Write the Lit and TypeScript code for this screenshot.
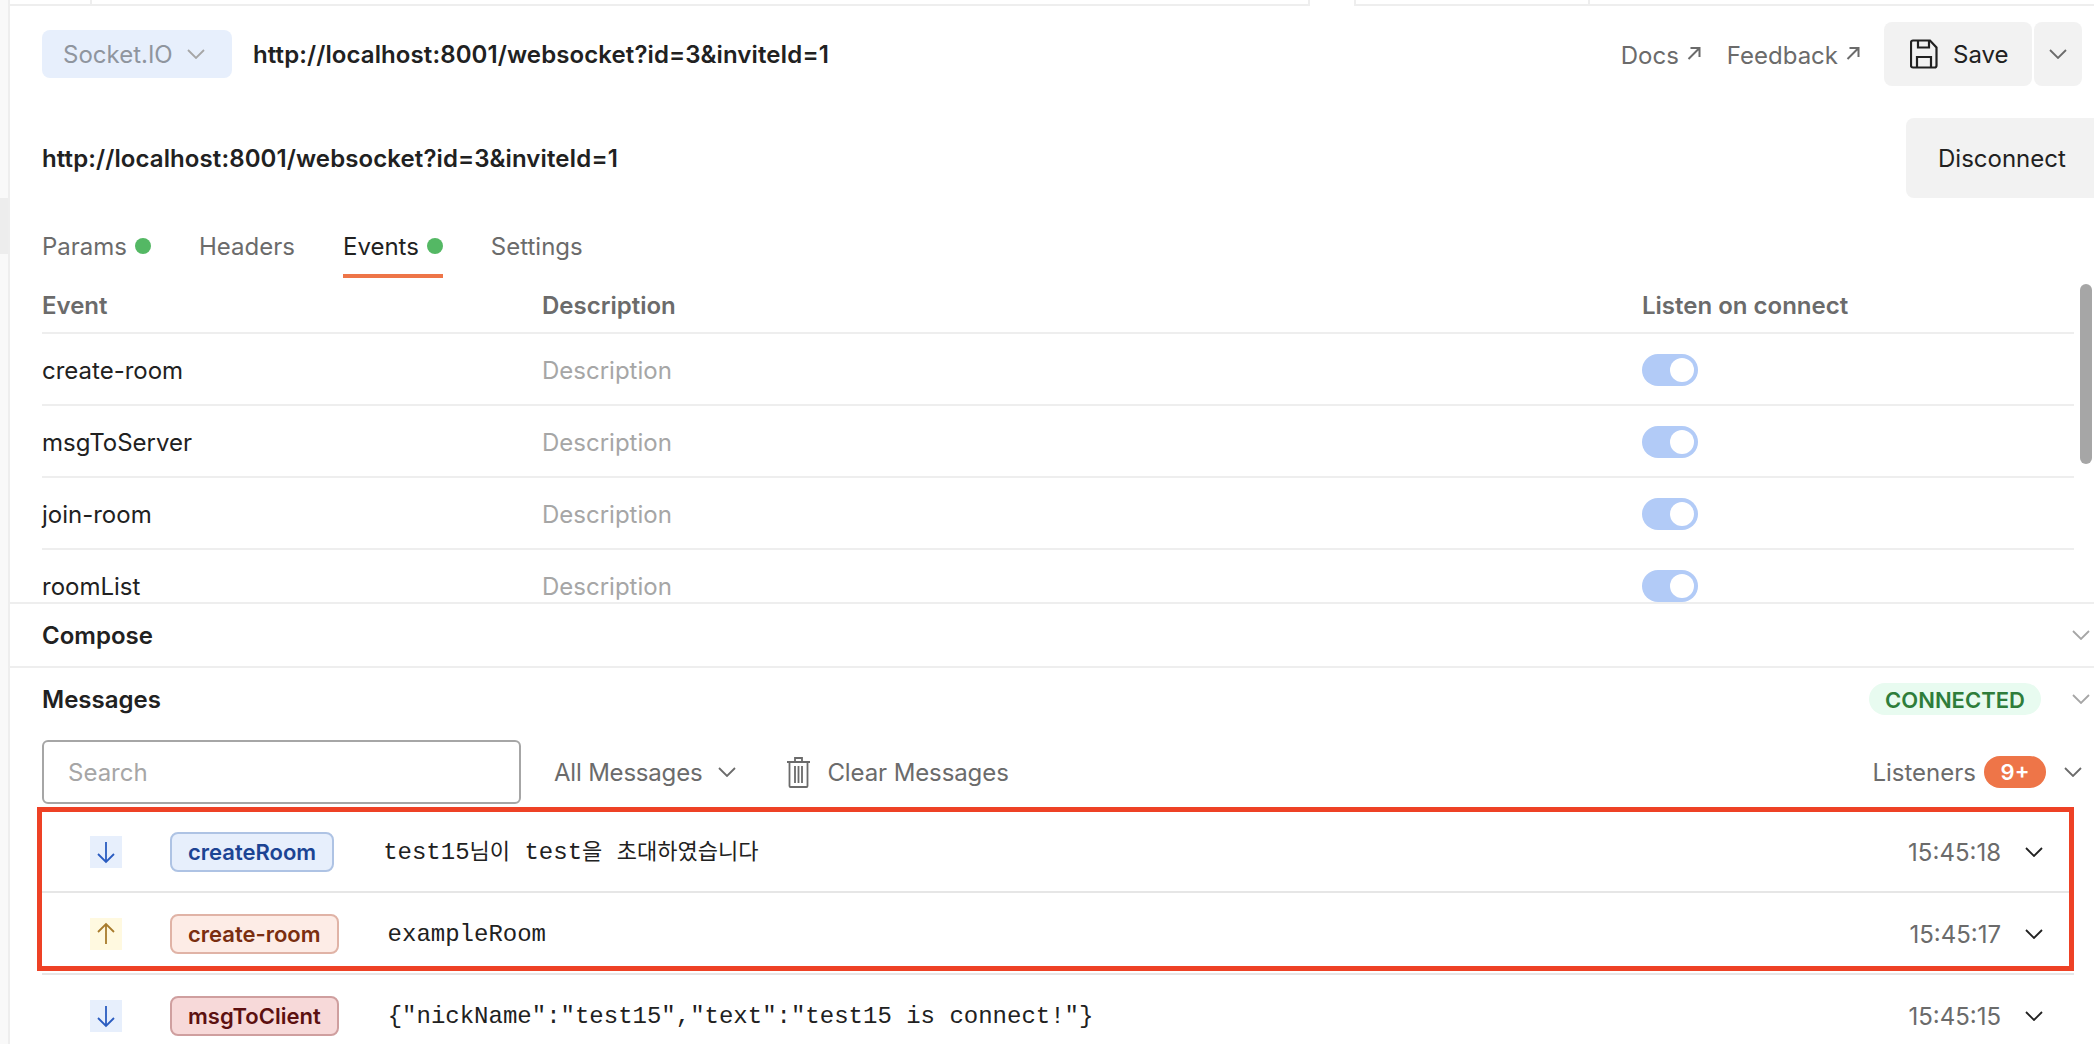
import { LitElement, html, css, svg } from "lit";
import { customElement } from "lit/decorators.js";

const chevron = () => html`<svg class="chev" viewBox="0 0 18 10" fill="none"><polyline points="1,1 9,9 17,1" stroke="currentColor" stroke-width="1.8"/></svg>`;
const ne = html`<svg class="ne" viewBox="0 0 14 14" fill="none" stroke="currentColor" stroke-width="2"><path d="M1.5 13 12 2.5M3.5 2h9v9"/></svg>`;
const arrow = (d: string) => svg`<path d=${d} fill="none" stroke="currentColor" stroke-width="1.8"/>`;

const events = ["create-room", "msgToServer", "join-room", "roomList"];
const messages = [
  { dir: "in", tag: "createRoom", cls: "blue", text: "test15님이 test을 초대하였습니다", time: "15:45:18" },
  { dir: "out", tag: "create-room", cls: "peach", text: "exampleRoom", time: "15:45:17" },
  { dir: "in", tag: "msgToClient", cls: "red", text: '{"nickName":"test15","text":"test15 is connect!"}', time: "15:45:15" },
];

// hangul runs are set a bit smaller than the latin mono around them
const monoText = (text: string) =>
  text.split(/([가-힣]+)/).map((part, i) => (i % 2 ? html`<span class="ko">${part}</span>` : part));

@customElement("app-root")
export class AppRoot extends LitElement {
  static styles = css`
    :host {
      display: flex;
      position: relative;
      width: 2094px;
      height: 1044px;
      overflow: hidden;
      background: #fff;
      color: #212121;
      font-family: Inter, "Noto Sans", sans-serif;
      font-size: 24px;
    }
    .rail { width: 8px; flex: none; background: #f9f9f9; border-right: 2px solid #eee; display: flex; flex-direction: column; }
    .rail i { display: block; margin-top: 198px; height: 56px; background: #ededed; }
    main { flex: 1; min-width: 0; display: flex; flex-direction: column; }

    .top { height: 6px; flex: none; display: flex; }
    .top i { display: block; box-sizing: border-box; border-bottom: 2px solid #eee; border-right: 2px solid #eee; }
    .top .a { width: 82px; }
    .top .b { width: 1218px; }
    .top .c { width: 236px; margin-left: 44px; border-left: 2px solid #eee; }
    .top .d { flex: 1; border-right: none; }

    .toolbar { height: 64px; margin-top: 16px; flex: none; display: flex; align-items: center; padding: 0 12px 0 32px; }
    .proto { width: 190px; height: 48px; box-sizing: border-box; background: #e7effc; border-radius: 8px; color: #8f959e; display: flex; align-items: center; padding-left: 21px; gap: 14px; }
    .proto .chev { color: #a6a6a6; }
    .url { font-weight: 600; letter-spacing: 0.1px; }
    .toolbar .url { margin-left: 21px; }
    .link { color: #6b6b6b; display: flex; align-items: center; gap: 8px; padding-top: 2px; }
    .docs { margin-left: auto; }
    .feedback { margin-left: 26px; }
    .ne { width: 14px; height: 14px; margin-top: -4px; }
    .save { margin-left: 24px; width: 148px; height: 64px; box-sizing: border-box; background: #f2f2f2; border-radius: 8px; display: flex; align-items: center; padding-left: 26px; gap: 15px; }
    .save svg { width: 28px; height: 30px; }
    .more { margin-left: 2px; width: 48px; height: 64px; background: #f2f2f2; border-radius: 8px; display: flex; align-items: center; justify-content: center; color: #6b6b6b; }

    .urlrow { height: 80px; margin-top: 32px; flex: none; display: flex; align-items: center; justify-content: space-between; padding-left: 32px; }
    .disconnect { width: 190px; height: 80px; margin-right: -2px; box-sizing: border-box; background: #f2f2f2; border-radius: 8px 0 0 8px; display: flex; align-items: center; padding-left: 32px; }

    .tabs { height: 80px; flex: none; display: flex; gap: 48px; padding-left: 32px; box-sizing: border-box; }
    .tab { height: 80px; box-sizing: border-box; display: flex; align-items: center; gap: 8px; color: #6b6b6b; padding-top: 20px; border-bottom: 4px solid transparent; }
    .tab.active { color: #212121; border-bottom-color: #ee7548; }
    .dot { width: 16px; height: 16px; border-radius: 50%; background: #54b864; }

    .table { height: 324px; flex: none; overflow: hidden; position: relative; padding: 0 20px 0 32px; }
    .thead, .trow { display: grid; grid-template-columns: 500px 1100px 1fr; align-items: center; border-bottom: 2px solid #eee; }
    .thead { height: 54px; color: #6b6b6b; font-weight: 600; }
    .trow { height: 68px; padding-top: 2px; }
    .desc { color: #a6a6a6; }
    .toggle { width: 56px; height: 32px; border-radius: 16px; background: #b2cbf7; display: flex; align-items: center; justify-content: flex-end; padding-right: 4px; box-sizing: border-box; }
    .toggle i { width: 24px; height: 24px; border-radius: 50%; background: #fff; }
    .thumb { position: absolute; right: 2px; top: 6px; width: 12px; height: 180px; border-radius: 6px; background: #a6a6a6; }

    .section { flex: none; display: flex; align-items: center; height: 62px; padding: 0 4px 0 32px; font-weight: 600; border-top: 2px solid #eee; }
    .section .chev { color: #a6a6a6; margin-left: auto; }
    .connected { margin-left: auto; margin-right: 31px; width: 172px; height: 32px; box-sizing: border-box; padding-top: 1px; border-radius: 16px; background: #e8fbf0; color: #2e7d3a; font-size: 22px; display: flex; align-items: center; justify-content: center; }
    .section .connected + .chev { margin-left: 0; }

    .filters { height: 64px; margin-top: 10px; flex: none; display: flex; align-items: center; padding: 0 12px 0 32px; color: #6b6b6b; }
    .search { width: 479px; height: 64px; box-sizing: border-box; border: 2px solid #a6a6a6; border-radius: 6px; color: #a6a6a6; display: flex; align-items: center; padding-left: 24px; }
    .all { margin-left: 33px; display: flex; align-items: center; gap: 16px; letter-spacing: -0.2px; }
    .clear { margin-left: 50px; display: flex; align-items: center; gap: 16px; letter-spacing: -0.1px; }
    .clear svg { width: 25px; height: 32px; }
    .listeners { margin-left: auto; display: flex; align-items: center; gap: 8px; }
    .badge { width: 62px; height: 32px; border-radius: 16px; background: #ee7548; color: #fff; font-weight: 600; font-size: 22px; display: flex; align-items: center; justify-content: center; }
    .listeners .chev { margin-left: 10px; }

    .list { margin: 7px 20px 0 32px; }
    .msg { height: 82px; box-sizing: border-box; border-bottom: 2px solid #e6e6e6; display: flex; align-items: center; padding: 2px 31px 0 48px; }
    .dir { width: 32px; height: 32px; flex: none; display: flex; align-items: center; justify-content: center; }
    .dir svg { width: 32px; height: 32px; }
    .dir.in { background: #e7effc; color: #2a5cc0; }
    .dir.out { background: #fff9e0; color: #a87b2c; }
    .tag { margin-left: 48px; height: 40px; box-sizing: border-box; border: 2px solid; border-radius: 8px; padding: 0 16px; display: flex; align-items: center; font-weight: 600; font-size: 22px; }
    .tag.blue { background: #e7effc; border-color: #aec3e4; color: #1c4494; }
    .tag.peach { background: #fdece6; border-color: #e0b3a6; color: #7a2e10; }
    .tag.red { background: #f7d9d9; border-color: #cf9f9f; color: #5c1010; }
    .body { margin-left: 49px; padding-top: 2px; font-family: "Liberation Mono", "Noto Sans CJK KR", monospace; font-size: 24px; line-height: 28px; white-space: pre; }
    .ko { font-size: 22px; line-height: 1; }
    .time { margin-left: auto; color: #6b6b6b; }
    .msg .chev { margin-left: 24px; color: #212121; }

    .chev { width: 18px; height: 10px; flex: none; }
    .mark { position: absolute; left: 37px; top: 807px; width: 2037px; height: 164px; box-sizing: border-box; border: 5px solid #ee4125; pointer-events: none; }
  `;

  render() {
    return html`
      <div class="rail"><i></i></div>
      <main>
        <div class="top"><i class="a"></i><i class="b"></i><i class="c"></i><i class="d"></i></div>
        <div class="toolbar">
          <div class="proto">Socket.IO ${chevron()}</div>
          <div class="url">http://localhost:8001/websocket?id=3&inviteId=1</div>
          <div class="link docs">Docs ${ne}</div>
          <div class="link feedback">Feedback ${ne}</div>
          <div class="save">
            <svg viewBox="0 0 28 30" fill="none" stroke="currentColor" stroke-width="2.2"><path d="M3 1.5h17l6.5 7v18a2 2 0 0 1-2 2H3a2 2 0 0 1-2-2v-23a2 2 0 0 1 2-2z"/><path d="M8 1.5v7h11v-7M7 28.5V18h14v10.5"/></svg>
            Save
          </div>
          <div class="more">${chevron()}</div>
        </div>
        <div class="urlrow">
          <div class="url">http://localhost:8001/websocket?id=3&inviteId=1</div>
          <div class="disconnect">Disconnect</div>
        </div>
        <div class="tabs">
          <div class="tab">Params <span class="dot"></span></div>
          <div class="tab">Headers</div>
          <div class="tab active">Events <span class="dot"></span></div>
          <div class="tab">Settings</div>
        </div>
        <div class="table">
          <div class="thead"><div>Event</div><div>Description</div><div>Listen on connect</div></div>
          ${events.map((e) => html`
            <div class="trow"><div>${e}</div><div class="desc">Description</div><div class="toggle"><i></i></div></div>
          `)}
          <div class="thumb"></div>
        </div>
        <div class="section">Compose ${chevron()}</div>
        <div class="section">Messages <span class="connected">CONNECTED</span>${chevron()}</div>
        <div class="filters">
          <div class="search">Search</div>
          <div class="all">All Messages ${chevron()}</div>
          <div class="clear">
            <svg viewBox="0 0 25 32" fill="none" stroke="currentColor" stroke-width="1.8"><path d="M1 6h23M9 6V2h7v4M3.5 6v24a1 1 0 0 0 1 1h16a1 1 0 0 0 1-1V6M9 10v17M12.5 10v17M16 10v17"/></svg>
            Clear Messages
          </div>
          <div class="listeners">Listeners <span class="badge">9+</span>${chevron()}</div>
        </div>
        <div class="list">
          ${messages.map((m) => html`
            <div class="msg">
              <div class="dir ${m.dir}">
                <svg viewBox="0 0 32 32">${arrow(m.dir === "in" ? "M16 6v20M8 18l8 8 8-8" : "M16 26V6M8 14l8-8 8 8")}</svg>
              </div>
              <div class="tag ${m.cls}">${m.tag}</div>
              <div class="body">${monoText(m.text)}</div>
              <div class="time">${m.time}</div>
              ${chevron()}
            </div>
          `)}
        </div>
      </main>
      <div class="mark"></div>
    `;
  }
}
